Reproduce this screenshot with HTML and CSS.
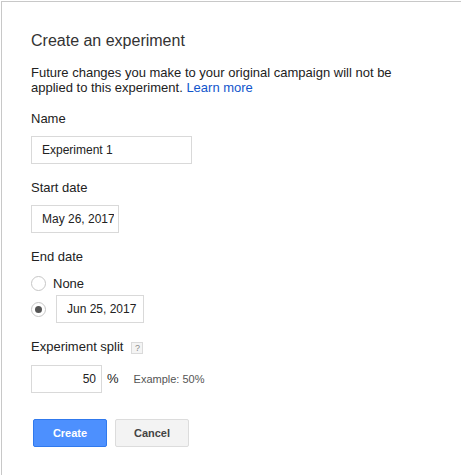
FILE: index.html
```html
<!DOCTYPE html>
<html>
<head>
<meta charset="utf-8">
<link rel="stylesheet" href="styles.css">
</head>
<body>
<div class="dialog">
  <h1 class="title">Create an experiment</h1>
  <p class="intro">Future changes you make to your original campaign will not be applied to this experiment. <a class="link" href="#">Learn more</a></p>

  <div class="field">
    <div class="label">Name</div>
    <input class="text name-input" type="text" value="Experiment 1">
  </div>

  <div class="field">
    <div class="label">Start date</div>
    <input class="text date-input" type="text" value="May 26, 2017">
  </div>

  <div class="field">
    <div class="label">End date</div>
    <div class="options">
      <div class="option option-none">
        <span class="radio"></span>
        <span class="option-text">None</span>
      </div>
      <div class="option option-date">
        <span class="radio checked"></span>
        <input class="text date-input" type="text" value="Jun 25, 2017">
      </div>
    </div>
  </div>

  <div class="field">
    <div class="label label-help">Experiment split <span class="help">?</span></div>
    <div class="split-row">
      <input class="text split-input" type="text" value="50">
      <span class="percent">%</span>
      <span class="example">Example: 50%</span>
    </div>
  </div>

  <div class="actions">
    <button class="btn btn-primary">Create</button>
    <button class="btn btn-default">Cancel</button>
  </div>
</div>
</body>
</html>
```
FILE: styles.css
```css
html, body {
  margin: 0;
  padding: 0;
  background: #fff;
}
body {
  font-family: "Liberation Sans", Arial, sans-serif;
  color: #222;
}
.dialog {
  margin: 1px 0 0 1px;
  border-top: 1px solid #c8c8c8;
  border-left: 1px solid #c8c8c8;
  padding: 29px 0 0 29px;
  height: 474px;
  box-sizing: border-box;
}
.title {
  margin: 0;
  font-size: 16px;
  font-weight: normal;
  line-height: 20px;
  color: #333;
}
.intro {
  margin: 14px 0 16px;
  font-size: 13px;
  line-height: 15px;
  max-width: 380px;
}
.link {
  color: #15c;
  text-decoration: none;
}
.field {
  margin-bottom: 16px;
}
.label {
  font-size: 13px;
  line-height: 15px;
  margin-bottom: 10px;
}
.label-help {
  display: flex;
  align-items: center;
  height: 15px;
  margin-bottom: 11px;
}
.help {
  display: inline-flex;
  align-items: center;
  justify-content: center;
  width: 12px;
  height: 12px;
  box-sizing: border-box;
  margin-left: 8px;
  margin-top: 2px;
  border: 1px solid #dadada;
  background: #f4f4f4;
  color: #8a8a8a;
  font-size: 9px;
  line-height: 10px;
}
.text {
  display: block;
  height: 28px;
  box-sizing: border-box;
  border: 1px solid #d9d9d9;
  border-radius: 0;
  padding: 0 4px 0 10px;
  margin: 0;
  font-family: "Liberation Sans", Arial, sans-serif;
  font-size: 12px;
  color: #222;
  background: #fff;
  outline: none;
}
.name-input {
  width: 161px;
}
.date-input {
  width: 88px;
}
.options {
  display: flex;
  flex-direction: column;
  gap: 3px;
}
.option {
  display: flex;
  align-items: center;
}
.option-none {
  height: 18px;
}
.radio {
  width: 15px;
  height: 15px;
  box-sizing: border-box;
  border: 1px solid #c6c6c6;
  border-radius: 50%;
  background: #fff;
  display: flex;
  align-items: center;
  justify-content: center;
  flex: none;
}
.radio.checked::after {
  content: "";
  width: 7px;
  height: 7px;
  border-radius: 50%;
  background: #555;
}
.option-text {
  font-size: 13px;
  margin-left: 7px;
}
.option-date .date-input {
  margin-left: 10px;
}
.split-row {
  display: flex;
  align-items: center;
}
.split-input {
  width: 71px;
  text-align: right;
  padding: 0 5px 0 4px;
}
.percent {
  font-size: 13px;
  margin-left: 5px;
  margin-top: -2px;
}
.example {
  font-size: 11px;
  color: #555;
  margin-left: 15px;
}
.actions {
  display: flex;
  gap: 8px;
  margin-top: 26px;
  margin-left: 2px;
}
.btn {
  width: 74px;
  height: 28px;
  box-sizing: border-box;
  border-radius: 2px;
  font-family: "Liberation Sans", Arial, sans-serif;
  font-size: 11px;
  font-weight: bold;
  padding: 0;
  margin: 0;
  cursor: pointer;
}
.btn-primary {
  background: #4d90fe;
  border: 1px solid #3079ed;
  color: #fff;
}
.btn-default {
  background: #f3f3f3;
  border: 1px solid #dcdcdc;
  color: #444;
}
```
